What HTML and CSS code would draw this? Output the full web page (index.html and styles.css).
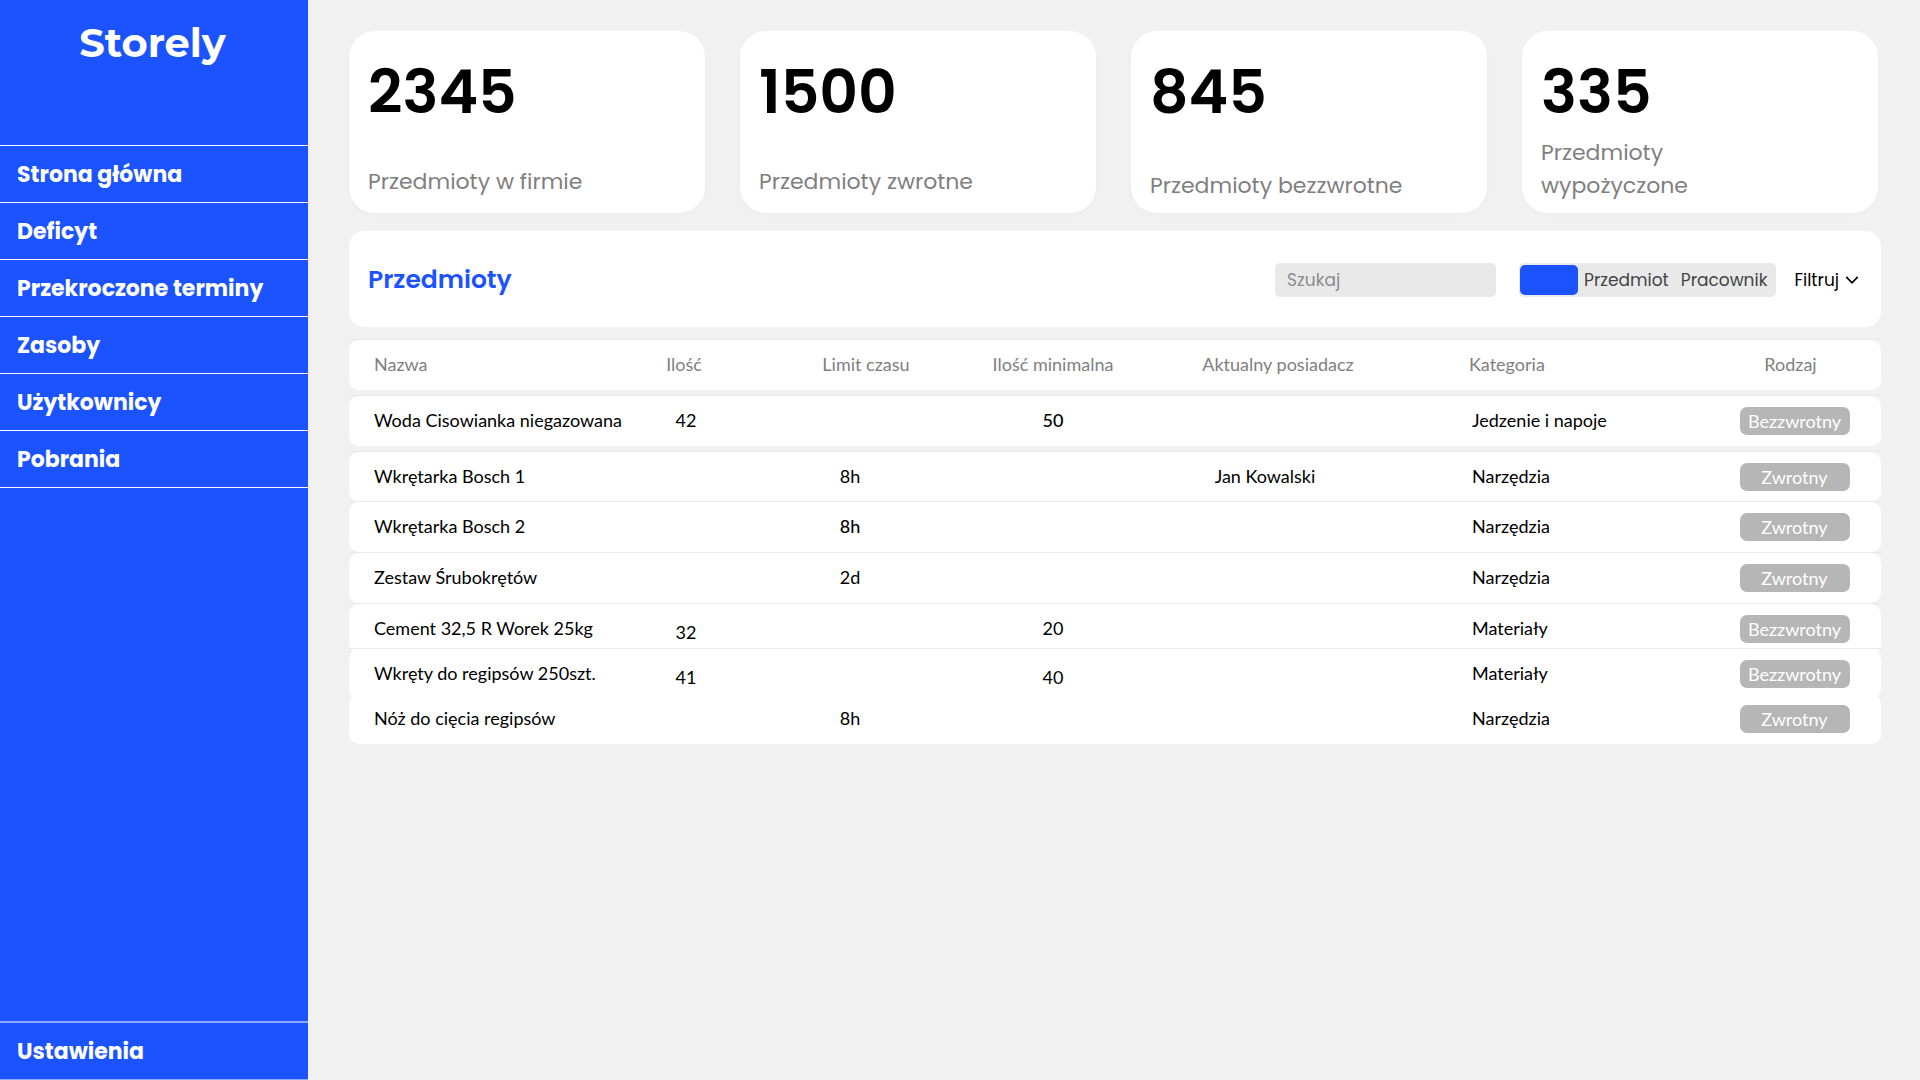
FILE: index.html
```html
<!DOCTYPE html>
<html lang="pl">
<head>
<meta charset="utf-8">
<meta name="viewport" content="width=device-width, initial-scale=1">
<title>Storely – Przedmioty</title>
<link rel="stylesheet" href="styles.css">
</head>
<body>
<div class="app">
  <aside class="sidebar">
    <div class="brand">Storely</div>
    <nav class="nav" aria-label="Menu główne">
      <a class="nav-link" href="#">Strona główna</a>
      <a class="nav-link" href="#">Deficyt</a>
      <a class="nav-link" href="#">Przekroczone terminy</a>
      <a class="nav-link" href="#">Zasoby</a>
      <a class="nav-link" href="#">Użytkownicy</a>
      <a class="nav-link" href="#">Pobrania</a>
    </nav>
    <a class="nav-link nav-settings" href="#">Ustawienia</a>
  </aside>

  <main class="content">
    <section class="stats">
      <div class="stat"><div class="stat-value">2345</div><div class="stat-label">Przedmioty w firmie</div></div>
      <div class="stat"><div class="stat-value">1500</div><div class="stat-label">Przedmioty zwrotne</div></div>
      <div class="stat stat-snug"><div class="stat-value">845</div><div class="stat-label">Przedmioty bezzwrotne</div></div>
      <div class="stat stat-snug"><div class="stat-value">335</div><div class="stat-label">Przedmioty<br>wypożyczone</div></div>
    </section>

    <section class="toolbar">
      <h1 class="title">Przedmioty</h1>
      <input class="search" type="search" placeholder="Szukaj" aria-label="Szukaj">
      <div class="segments">
        <button class="segment segment-active" type="button" aria-label="Wszystko" aria-pressed="true"></button>
        <button class="segment" type="button">Przedmiot</button>
        <button class="segment" type="button">Pracownik</button>
      </div>
      <button class="filter" type="button">Filtruj
        <svg class="chevron" viewBox="0 0 14 10" aria-hidden="true"><path d="M1.200 1.800 7 7.800l5.800-6"/></svg>
      </button>
    </section>

    <table class="items">
      <thead>
        <tr class="row spaced">
          <th>Nazwa</th><th>Ilość</th><th>Limit czasu</th><th>Ilość minimalna</th><th>Aktualny posiadacz</th><th>Kategoria</th><th>Rodzaj</th>
        </tr>
      </thead>
      <tbody>
        <tr class="row spaced"><td>Woda Cisowianka niegazowana</td><td>42</td><td></td><td class="strong">50</td><td></td><td>Jedzenie i napoje</td><td><span class="badge">Bezzwrotny</span></td></tr>
        <tr class="row joined"><td>Wkrętarka Bosch 1</td><td></td><td>8h</td><td></td><td>Jan Kowalski</td><td>Narzędzia</td><td><span class="badge">Zwrotny</span></td></tr>
        <tr class="row"><td>Wkrętarka Bosch 2</td><td></td><td class="strong">8h</td><td></td><td></td><td>Narzędzia</td><td><span class="badge">Zwrotny</span></td></tr>
        <tr class="row"><td>Zestaw Śrubokrętów</td><td></td><td>2d</td><td></td><td></td><td>Narzędzia</td><td><span class="badge">Zwrotny</span></td></tr>
        <tr class="row stacked"><td>Cement 32,5 R Worek 25kg</td><td class="low">32</td><td></td><td>20</td><td></td><td>Materiały</td><td><span class="badge">Bezzwrotny</span></td></tr>
        <tr class="row stacked"><td>Wkręty do regipsów 250szt.</td><td class="low">41</td><td></td><td class="low">40</td><td></td><td>Materiały</td><td><span class="badge">Bezzwrotny</span></td></tr>
        <tr class="row last"><td>Nóż do cięcia regipsów</td><td></td><td>8h</td><td></td><td></td><td>Narzędzia</td><td><span class="badge">Zwrotny</span></td></tr>
      </tbody>
    </table>
  </main>
</div>
</body>
</html>
```
FILE: styles.css
```css
:root {
  --blue: #1a53ff;
  --page: #f1f1f1;
  --muted: #7f7f7f;
  --control: #e9e9e9;
  --heading-font: Poppins, Inter, "Open Sans", sans-serif;
  --table-font: Lato, "Open Sans", sans-serif;
}

* { box-sizing: border-box; }

body {
  margin: 0;
  background: var(--page);
  color: #000;
  font-family: var(--heading-font);
}

.app { display: flex; min-height: 100vh; }

/* Sidebar */
.sidebar {
  flex: 0 0 308px;
  display: flex;
  flex-direction: column;
  background: var(--blue);
  color: #fff;
}

.brand {
  height: 145px;
  padding: 19px 3px 0 0;
  text-align: center;
  font-family: Montserrat, Inter, sans-serif;
  font-size: 40px;
  line-height: 48px;
  font-weight: 700;
}

.nav { border-top: 1px solid #fff; }

.nav-link {
  display: block;
  height: 57px;
  padding-left: 17px;
  border-bottom: 1px solid #fff;
  color: #fff;
  font-size: 22px;
  line-height: 58px;
  font-weight: 700;
  text-decoration: none;
}

.nav-settings {
  height: 59px;
  margin-top: auto;
  border-top: 2px solid #8ba9ff;
  border-bottom-color: #8ba9ff;
}

/* Main column */
.content {
  flex: 1;
  min-width: 0;
  padding: 31px 39px 31px 41px;
}

.stats {
  display: grid;
  grid-template-columns: repeat(4, 1fr);
  gap: 35px;
  margin-right: 3px;
}

.stat {
  display: flex;
  flex-direction: column;
  justify-content: space-between;
  min-height: 182px;
  padding: 29px 19px 15px;
  border-radius: 26px;
  background: #fff;
  box-shadow: 0 2px 6px rgba(0, 0, 0, 0.02);
}

.stat-snug { padding-bottom: 11px; }

.stat-value {
  font-size: 60px;
  line-height: 64px;
  font-weight: 600;
}

.stat-label {
  color: var(--muted);
  font-size: 22px;
  line-height: 33px;
}

.toolbar {
  display: flex;
  align-items: center;
  min-height: 96px;
  margin: 18px 0 12px;
  padding: 2px 22px 0 19px;
  border-radius: 15px;
  background: #fff;
}

.title {
  margin: 0 auto 0 0;
  color: var(--blue);
  font-size: 25px;
  line-height: 36px;
  font-weight: 600;
}

.search {
  width: 221px;
  height: 34px;
  margin-right: 23px;
  padding: 0 12px;
  border: 0;
  border-radius: 5px;
  background: var(--control);
  font: 400 17px var(--heading-font);
}

.search::placeholder { color: #8c8c8c; opacity: 1; }

.segments {
  display: flex;
  align-items: center;
  height: 34px;
  margin-right: 18px;
  padding: 0 3px 0 1px;
  border-radius: 5px;
  background: var(--control);
}

.segment {
  height: 30px;
  padding: 0 6px;
  border: 0;
  border-radius: 5px;
  background: none;
  color: #444;
  font: 400 17px var(--heading-font);
}

.segment-active { width: 58px; background: var(--blue); }

.filter {
  display: flex;
  align-items: center;
  gap: 6px;
  padding: 0;
  border: 0;
  background: none;
  color: #000;
  font: 400 17px var(--heading-font);
}

.chevron {
  width: 14px;
  height: 10px;
  fill: none;
  stroke: #000;
  stroke-width: 1.700;
}

/* Item table */
.items {
  display: block;
  font-family: var(--table-font);
  font-size: 18px;
  line-height: 28px;
}

.items thead,
.items tbody { display: block; }

.row {
  position: relative;
  display: grid;
  grid-template-columns: 296fr 82fr 246fr 160fr 264fr 303fr 181fr;
  height: 51px;
  border-top: 1px solid #e9e9e9;
}

.spaced { margin-bottom: 5px; }

.joined { margin-bottom: -1px; }

.stacked { margin-bottom: -6px; }

.last { border-top-color: transparent; }

.row > * {
  padding: 10px 0 0;
  background: #fff;
  font-weight: 400;
  text-align: center;
  white-space: nowrap;
}

.row > :first-child {
  padding-left: 25px;
  border-radius: 10px 0 0 10px;
  text-align: left;
}

.row > :nth-child(6) { padding-left: 75px; text-align: left; }

.row > :last-child { border-radius: 0 10px 10px 0; }

.row > td:last-child { padding: 11px 0 0 8px; }

.row > th { color: var(--muted); }

.row > th:nth-child(2) { padding-right: 4px; }

.row > th:nth-child(3) { padding-left: 32px; }

.row > th:nth-child(5) { padding-left: 26px; }

.row > th:nth-child(6) { padding-left: 72px; }

.row > .strong { font-weight: 500; }

.row > .low { padding-top: 14px; }

.badge {
  display: block;
  width: 110px;
  height: 28px;
  margin: 0 auto;
  border-radius: 7px;
  background: #b6b6b6;
  color: #fff;
}
```
